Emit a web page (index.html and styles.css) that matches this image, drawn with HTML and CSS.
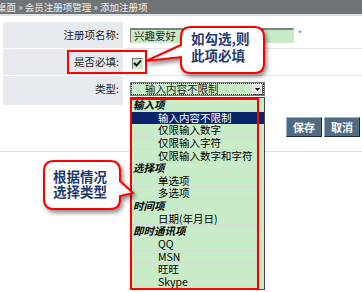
FILE: index.html
```html
<!DOCTYPE html>
<html lang="zh-CN">
<head>
  <meta charset="UTF-8" />
  <title>添加注册项</title>
  <link rel="stylesheet" href="styles.css">
</head>
<body>
<div class="page">
  <div class="crumb">桌面 » 会员注册项管理 » 添加注册项</div>

  <div class="form">
    <div class="row">
      <div class="label">注册项名称:</div>
      <div class="field">
        <input class="text-input" type="text" value="兴趣爱好" />
        <span class="req">*</span>
      </div>
    </div>
    <div class="row">
      <div class="label">是否必填:</div>
      <div class="field">
        <span class="check">
          <svg width="9" height="9" viewBox="0 0 9 9"><path d="M1 4 L3.5 6.5 L8 1.5" fill="none" stroke="#000" stroke-width="1.8"/></svg>
        </span>
      </div>
    </div>
    <div class="row row-tall">
      <div class="label">类型:</div>
      <div class="field">
        <div class="select">
          <span class="select-text">输入内容不限制</span>
          <span class="select-btn"><svg width="5" height="3" viewBox="0 0 5 3"><path d="M0 0 H5 L2.5 3 Z" fill="#000"/></svg></span>
        </div>
      </div>
    </div>
  </div>

  <div class="actions">
    <button class="btn">保存</button>
    <button class="btn">取消</button>
  </div>

  <!-- open dropdown of the type select -->
  <ul class="options">
    <li class="group">输入项</li>
    <li class="opt selected">输入内容不限制</li>
    <li class="opt">仅限输入数字</li>
    <li class="opt">仅限输入字符</li>
    <li class="opt">仅限输入数字和字符</li>
    <li class="group">选择项</li>
    <li class="opt">单选项</li>
    <li class="opt">多选项</li>
    <li class="group">时间项</li>
    <li class="opt">日期(年月日)</li>
    <li class="group">即时通讯项</li>
    <li class="opt">QQ</li>
    <li class="opt">MSN</li>
    <li class="opt">旺旺</li>
    <li class="opt">Skype</li>
  </ul>

  <!-- annotations -->
  <div class="mark mark-required"></div>
  <div class="mark mark-list"></div>

  <div class="callout callout-required">
    <svg class="bubble" width="122" height="52" viewBox="0 0 122 52">
      <path d="M46 1 H109 Q119 1 119 11 V37 Q119 47 109 47 H46 Q36 47 36 37 V31 L1 35 L36 19 V11 Q36 1 46 1 Z" fill="#fff" stroke="#f00" stroke-width="2"/>
    </svg>
    <div class="callout-text">如勾选,则<br>此项必填</div>
  </div>

  <div class="callout callout-type">
    <svg class="bubble" width="100" height="58" viewBox="0 0 100 58">
      <path d="M14 3 H70 Q80 3 80 13 V23 L93 35 L80 38 V41 Q80 51 70 51 H14 Q4 51 4 41 V13 Q4 3 14 3 Z" fill="#fff" stroke="#f00" stroke-width="2"/>
    </svg>
    <div class="callout-text">根据情况<br>选择类型</div>
  </div>
</div>
</body>
</html>
```

FILE: styles.css
```css
body {
  margin: 0;
  background: #fff;
  font-family: "Noto Sans CJK SC", "Noto Sans", sans-serif;
  font-size: 10.5px;
  color: #222;
}
.page {
  position: relative;
  width: 362px;
  height: 292px;
  overflow: hidden;
}
.crumb {
  height: 14px;
  line-height: 14px;
  background: #6e7476;
  color: #eef0f0;
  font-size: 9.5px;
  text-indent: -3px;
  white-space: nowrap;
  border-bottom: 2px solid #dde1e3;
}
.form {
  margin: 6px 0 0 3px;
}
.row {
  display: grid;
  grid-template-columns: 120px 1fr;
  column-gap: 2px;
  height: 27px;
}
.row-tall {
  height: 30px;
}
.label {
  background: #e6eaee;
  border-bottom: 1px solid #fff;
  text-align: right;
  padding-right: 4px;
  line-height: 26px;
}
.field {
  display: flex;
  align-items: center;
  border-bottom: 1px solid #e2e4e6;
  padding-left: 5px;
}
.row-tall .field {
  align-items: flex-start;
  padding-top: 6px;
  border-bottom: none;
}
.text-input {
  box-sizing: border-box;
  width: 164px;
  height: 15px;
  margin: 0 0 0 0;
  padding: 0 3px;
  font: inherit;
  color: #222;
  background: #c6ebc6;
  border: 1px solid #c6ebc6;
  border-top: 2px solid #808080;
  border-left: 1px solid #808080;
  outline: none;
}
.req {
  margin-left: 4px;
  margin-top: -4px;
  font-size: 8px;
  color: #555;
}
.check {
  display: flex;
  align-items: center;
  justify-content: center;
  box-sizing: border-box;
  width: 11px;
  height: 11px;
  margin-left: 2px;
  margin-top: 2px;
  background: #c6ebc6;
  border: 1px solid #c6ebc6;
  border-top-color: #707070;
  border-left-color: #707070;
}
.select {
  box-sizing: border-box;
  display: flex;
  align-items: center;
  width: 135px;
  height: 14px;
  background: #c8ecc8;
  border: 1px solid #7a7a7a;
  outline: 1px dotted #333;
  outline-offset: -2px;
}
.select-text {
  flex: 1;
  padding-left: 14px;
  line-height: 12px;
}
.select-btn {
  display: flex;
  align-items: center;
  justify-content: center;
  width: 11px;
  height: 11px;
  margin-right: 1px;
  background: #e4e4e4;
  border: 1px solid #fff;
  border-right-color: #666;
  border-bottom-color: #666;
  box-sizing: border-box;
}
.actions {
  display: flex;
  justify-content: flex-end;
  gap: 2px;
  padding: 11px 2px 14px 0;
  border-bottom: 1px solid #dcdfe1;
}
.btn {
  height: 20px;
  padding: 0 6px;
  font-family: inherit;
  font-size: 11px;
  font-weight: bold;
  color: #fff;
  background: #4f6b86;
  border: 1px solid;
  border-color: #9db0c2 #1c2a38 #1c2a38 #9db0c2;
}
.options {
  position: absolute;
  left: 130px;
  top: 97px;
  width: 135px;
  height: 193px;
  box-sizing: border-box;
  margin: 0;
  padding: 1px 0 0;
  list-style: none;
  background: #c8ecc8;
  border: 1px solid #444;
}
.options li {
  box-sizing: border-box;
  height: 12.64px;
  line-height: 12px;
  white-space: nowrap;
  color: #000;
}
.group {
  padding-left: 2px;
  font-weight: bold;
  font-style: italic;
}
.opt {
  padding-left: 27px;
  border-bottom: 1px solid #d6dcd6;
}
.opt.selected {
  background: #0a246a;
  color: #fff;
  border-bottom-color: #0a246a;
}
.mark {
  position: absolute;
  border: 2px solid #f00;
  box-sizing: border-box;
}
.mark-required {
  left: 67px;
  top: 50px;
  width: 80px;
  height: 24px;
}
.mark-list {
  left: 130px;
  top: 98px;
  width: 129px;
  height: 192px;
}
.callout {
  position: absolute;
}
.callout-required {
  left: 145px;
  top: 26px;
  width: 122px;
  height: 52px;
}
.callout-type {
  left: 40px;
  top: 158px;
  width: 100px;
  height: 58px;
}
.bubble {
  position: absolute;
  left: 0;
  top: 0;
  filter: drop-shadow(2px 3px 2px rgba(0, 0, 0, 0.45));
}
.callout-text {
  position: relative;
  font-size: 13.5px;
  font-weight: bold;
  color: #1e3a70;
  white-space: nowrap;
}
.callout-required .callout-text {
  padding: 4px 0 0 46px;
  line-height: 17px;
}
.callout-type .callout-text {
  padding: 11px 0 0 13px;
  line-height: 14.5px;
}
```
